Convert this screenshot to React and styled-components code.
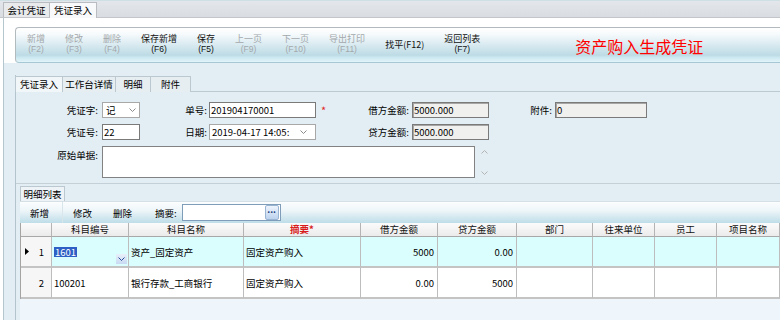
import React from "react";
import styled, { createGlobalStyle } from "styled-components";

const GlobalStyle = createGlobalStyle`
  html, body { margin: 0; padding: 0; background: #ffffff; }
  body {
    font-family: "Noto Sans CJK SC", "Noto Sans", sans-serif;
    font-size: 9.5px;
    color: #000;
    overflow: hidden;
  }
`;

const Page = styled.div`
  width: 780px;
  height: 320px;
  overflow: hidden;
  display: flex;
  flex-direction: column;
`;

/* ---------- top document tabs ---------- */
const TopTabBar = styled.div`
  flex: none;
  height: 17px;
  display: flex;
  align-items: flex-end;
  padding-left: 4px;
  background: linear-gradient(#cfe0e4 0, #cfe0e4 1px, #e3e6ea 1px, #d9dde2 100%);
  border-bottom: 1px solid #c2c6ca;
`;

const TopTab = styled.div`
  box-sizing: border-box;
  width: ${(p) => p.$w}px;
  height: ${(p) => (p.$active ? 16 : 15)}px;
  margin-bottom: ${(p) => (p.$active ? -1 : 0)}px;
  margin-left: -1px;
  border: 1px solid #b9bdc2;
  border-bottom: none;
  background: ${(p) => (p.$active ? "#f8f9fa" : "#e8eaec")};
  text-align: center;
  line-height: 14px;
`;

const Main = styled.div`
  flex: 1;
  min-height: 0;
  margin-left: 3px;
  border-left: 1px solid #b6c6ce;
  display: flex;
  flex-direction: column;
`;

/* ---------- big toolbar ---------- */
const HeaderBand = styled.div`
  flex: none;
  background: #ffffff;
  padding: 9px 0 0 11px;
`;

const Toolbar = styled.div`
  height: 34px;
  border: 1px solid #b3babe;
  border-right: none;
  border-bottom-color: #a6c8d4;
  border-radius: 4px 0 0 4px;
  background: linear-gradient(
    #ffffff 0%,
    #f6fafc 18%,
    #d8eaf0 50%,
    #bddbe5 80%,
    #cfeaf2 88%,
    #e0f3f8 100%
  );
  display: flex;
  align-items: center;
  gap: 20px;
  padding-left: 11px;
`;

const ToolButton = styled.div`
  display: flex;
  flex-direction: column;
  align-items: center;
  font-size: 9px;
  line-height: 11px;
  color: ${(p) => (p.$disabled ? "#a3a8ab" : "#111")};
  white-space: nowrap;
  margin-top: -2px;
`;

const FKey = styled.span`
  font-family: "Liberation Sans", Arial, sans-serif;
  font-size: 8.5px;
  line-height: 11px;
`;

const Banner = styled.div`
  margin-left: 75px;
  margin-top: 2px;
  color: #ff0000;
  font-size: 16px;
  line-height: 18px;
  white-space: nowrap;
`;

/* ---------- lower area ---------- */
const LowerArea = styled.div`
  flex: 1;
  min-height: 0;
  background: #e2eef3;
  padding: 12px 0 0 11px;
  display: flex;
  flex-direction: column;
`;

const SubPanel = styled.div`
  flex: 1;
  min-height: 0;
  border-left: 1px solid #b4c4cc;
  display: flex;
  flex-direction: column;
`;

const TabRow = styled.div`
  flex: none;
  height: 16px;
  display: flex;
  align-items: flex-end;
  border-bottom: 1px solid #bccad2;
`;

const Tab = styled.div`
  box-sizing: border-box;
  width: ${(p) => p.$w}px;
  height: 16px;
  margin-left: -1px;
  margin-bottom: -1px;
  border: 1px solid #bcc8d0;
  border-bottom: none;
  background: ${(p) => (p.$active ? "#f1f6f9" : "#e6eef2")};
  text-align: center;
  line-height: 15px;
`;

/* ---------- voucher form ---------- */
const FormPanel = styled.div`
  flex: none;
  background: #e3eef4;
  padding: 10px 0 5px 0;
  border-bottom: 1px solid #c4d0d8;
`;

const FormGrid = styled.div`
  display: grid;
  grid-template-columns: 86px 38px 69px 107px 25px 71px 77px 66px 92px;
  row-gap: 6px;
  align-items: center;
`;

const Label = styled.div`
  text-align: right;
  padding-right: ${(p) => p.$pr ?? 3}px;
  white-space: nowrap;
  align-self: ${(p) => (p.$top ? "start" : "center")};
  padding-top: ${(p) => (p.$top ? 2 : 0)}px;
`;

const Field = styled.div`
  box-sizing: border-box;
  height: 16px;
  border: 1px solid ${(p) => (p.$light ? "#a8a8a8" : "#7a7a7a")};
  background: ${(p) => (p.$disabled ? "#f0f0ee" : "#ffffff")};
  box-shadow: ${(p) => (p.$disabled ? "inset 1px 1px 0 #a6a6a6" : "none")};
  padding: 0 ${(p) => (p.$padL ?? 1)}px;
  line-height: 13px;
  display: flex;
  align-items: center;
  justify-content: space-between;
  white-space: nowrap;
  overflow: hidden;
`;

const Star = styled.div`
  color: #e02828;
  padding-left: 5px;
  font-size: 11px;
`;

const MemoWrap = styled.div`
  grid-column: 2 / -1;
  display: flex;
  align-items: stretch;
  gap: 4px;
`;

const MemoBox = styled.div`
  box-sizing: border-box;
  width: 373px;
  height: 32px;
  border: 1px solid #828282;
  background: #ffffff;
`;

const ScrollArrows = styled.div`
  width: 10px;
  display: flex;
  flex-direction: column;
  justify-content: space-between;
  align-items: center;
  padding: 4px 0 3px;
`;

const ChevronGap = styled.span`
  display: flex;
  padding-right: 6px;
`;

const Chevron = ({ up, color = "#8a8a8a", w = 7 }) => (
  <svg width={w} height="4" viewBox="0 0 7 4">
    <polyline
      points={up ? "0.5,3.5 3.5,0.5 6.5,3.5" : "0.5,0.5 3.5,3.5 6.5,0.5"}
      fill="none"
      stroke={color}
      strokeWidth="1"
    />
  </svg>
);

/* ---------- detail list ---------- */
const Detail = styled.div`
  flex: 1;
  min-height: 0;
  display: flex;
  flex-direction: column;
  padding-left: 4px;
`;

const DetailTabRow = styled.div`
  flex: none;
  height: 17px;
  display: flex;
  align-items: flex-end;
`;

const DetailTab = styled.div`
  box-sizing: border-box;
  width: 45px;
  height: 15px;
  border: 1px solid #bcc8d0;
  border-bottom: none;
  background: #edf3f7;
  text-align: center;
  line-height: 14px;
`;

const DetailToolbar = styled.div`
  flex: none;
  height: 22px;
  display: flex;
  align-items: center;
  border-top: 1px solid #d4e0e6;
  box-sizing: border-box;
  background: linear-gradient(#fbfdfe 0%, #eef6f9 40%, #d2e7ef 75%, #bedde8 100%);
`;

const ListButton = styled.div`
  box-sizing: border-box;
  width: ${(p) => p.$w}px;
  height: 100%;
  padding-left: 10px;
  display: flex;
  align-items: center;
  border-right: ${(p) => (p.$sep ? "1px solid #d8e6ec" : "none")};
`;

const SearchLabel = styled.div`
  padding-left: 12px;
  padding-right: 5px;
`;

const SearchInput = styled.div`
  box-sizing: border-box;
  width: 99px;
  height: 17px;
  border: 1px solid #7f9db9;
  background: #ffffff;
  display: flex;
  justify-content: flex-end;
  align-items: center;
  padding-right: 1px;
`;

const EllipsisButton = styled.div`
  width: 12px;
  height: 13px;
  border: 1px solid #9ab4d4;
  border-radius: 2px;
  background: linear-gradient(#eef4fc, #bcd2ee);
  color: #1c3c7c;
  font-size: 9px;
  line-height: 8px;
  text-align: center;
  font-weight: 700;
`;

const TableArea = styled.div`
  flex: 1;
  min-height: 0;
  background: #eef5fb;
  overflow: hidden;
`;

const Grid = styled.div`
  display: grid;
  grid-template-columns: 31px 77px 115px 117px 77px 79px 76px 62px 62px 63px 90px;
  width: max-content;
  border-left: 1px solid #a4a4a4;
`;

const HeadCell = styled.div`
  box-sizing: border-box;
  height: 14px;
  line-height: 12px;
  text-align: center;
  background: linear-gradient(#fbfbfb, #ebebeb);
  border-right: 1px solid #b4b4b4;
  border-bottom: 1px solid #a8a8a8;
  color: ${(p) => (p.$required ? "#d81c1c" : "#111")};
  font-weight: ${(p) => (p.$required ? 700 : 400)};
  white-space: nowrap;
`;

const Cell = styled.div`
  position: relative;
  box-sizing: border-box;
  height: 31px;
  display: flex;
  align-items: center;
  justify-content: ${(p) => (p.$right ? "flex-end" : "flex-start")};
  padding: 0 ${(p) => (p.$right ? 3 : 2)}px 0 2px;
  background: ${(p) => (p.$active ? "#dafdfd" : "#ffffff")};
  border-right: 1px solid #bdbdbd;
  border-bottom: 2px solid #c4c4c4;
  white-space: nowrap;
`;

const IndexCell = styled(Cell)`
  background: #f6f6f6;
  justify-content: space-between;
  padding: 0 7px 0 4px;
`;

const Selected = styled.span`
  background: #2d5fc4;
  color: #ffffff;
  line-height: 10px;
  padding: 0 1px;
`;

const DropButton = styled.div`
  position: absolute;
  right: 1px;
  bottom: 2px;
  width: 11px;
  height: 10px;
  display: flex;
  align-items: center;
  justify-content: center;
  background: linear-gradient(#e8f0fa, #c8daf2);
`;

const columns = ["科目编号", "科目名称", "摘要*", "借方金额", "贷方金额", "部门", "往来单位", "员工", "项目名称", ""];

const rows = [
  { n: 1, code: "1601", name: "资产_固定资产", memo: "固定资产购入", debit: "5000", credit: "0.00", active: true },
  { n: 2, code: "100201", name: "银行存款_工商银行", memo: "固定资产购入", debit: "0.00", credit: "5000" },
];

const toolButtons = [
  { label: "新增", key: "(F2)", disabled: true },
  { label: "修改", key: "(F3)", disabled: true },
  { label: "删除", key: "(F4)", disabled: true },
  { label: "保存新增", key: "(F6)" },
  { label: "保存", key: "(F5)" },
  { label: "上一页", key: "(F9)", disabled: true },
  { label: "下一页", key: "(F10)", disabled: true },
  { label: "导出打印", key: "(F11)", disabled: true },
  { label: "找平(F12)" },
  { label: "返回列表", key: "(F7)" },
];

const App = () => {
  return (
    <Page>
      <GlobalStyle />
      <TopTabBar>
        <TopTab $w={47}>会计凭证</TopTab>
        <TopTab $w={48} $active>凭证录入</TopTab>
      </TopTabBar>
      <Main>
        <HeaderBand>
          <Toolbar>
            {toolButtons.map((b) => (
              <ToolButton key={b.label} $disabled={b.disabled}>
                <span>{b.label}</span>
                {b.key && <FKey>{b.key}</FKey>}
              </ToolButton>
            ))}
            <Banner>资产购入生成凭证</Banner>
          </Toolbar>
        </HeaderBand>

        <LowerArea>
          <SubPanel>
            <TabRow>
              <Tab $w={48} $active>凭证录入</Tab>
              <Tab $w={54}>工作台详情</Tab>
              <Tab $w={36}>明细</Tab>
              <Tab $w={41}>附件</Tab>
            </TabRow>

            <FormPanel>
              <FormGrid>
                <Label $pr={4}>凭证字:</Label>
                <Field $light $padL={3}>
                  <span>记</span>
                  <Chevron />
                </Field>
                <Label $pr={2}>单号:</Label>
                <Field>201904170001</Field>
                <Star>*</Star>
                <Label>借方金额:</Label>
                <Field $disabled>5000.000</Field>
                <Label>附件:</Label>
                <Field $disabled>0</Field>

                <Label $pr={4}>凭证号:</Label>
                <Field>22</Field>
                <Label $pr={2}>日期:</Label>
                <Field $light $padL={2}>
                  <span>2019-04-17 14:05:</span>
                  <ChevronGap>
                    <Chevron />
                  </ChevronGap>
                </Field>
                <div />
                <Label>贷方金额:</Label>
                <Field $disabled>5000.000</Field>
                <div />
                <div />

                <Label $pr={4} $top>原始单据:</Label>
                <MemoWrap>
                  <MemoBox />
                  <ScrollArrows>
                    <Chevron up color="#b4b4b4" />
                    <Chevron color="#b4b4b4" />
                  </ScrollArrows>
                </MemoWrap>
              </FormGrid>
            </FormPanel>

            <Detail>
              <DetailTabRow>
                <DetailTab>明细列表</DetailTab>
              </DetailTabRow>
              <DetailToolbar>
                <ListButton $w={43} $sep>新增</ListButton>
                <ListButton $w={40}>修改</ListButton>
                <ListButton $w={40}>删除</ListButton>
                <SearchLabel>摘要:</SearchLabel>
                <SearchInput>
                  <EllipsisButton>...</EllipsisButton>
                </SearchInput>
              </DetailToolbar>

              <TableArea>
                <Grid>
                  <HeadCell />
                  {columns.map((c, i) => (
                    <HeadCell key={i} $required={c === "摘要*"}>
                      {c}
                    </HeadCell>
                  ))}
                  {rows.map((r) => (
                    <React.Fragment key={r.n}>
                      <IndexCell>
                        {r.active ? (
                          <svg width="4" height="7" viewBox="0 0 4 7">
                            <polygon points="0,0 4,3.5 0,7" fill="#000" />
                          </svg>
                        ) : (
                          <span />
                        )}
                        <span>{r.n}</span>
                      </IndexCell>
                      <Cell $active={r.active}>
                        {r.active ? <Selected>{r.code}</Selected> : r.code}
                        {r.active && (
                          <DropButton>
                            <Chevron color="#2c4c9c" />
                          </DropButton>
                        )}
                      </Cell>
                      <Cell $active={r.active}>{r.name}</Cell>
                      <Cell $active={r.active}>{r.memo}</Cell>
                      <Cell $active={r.active} $right>{r.debit}</Cell>
                      <Cell $active={r.active} $right>{r.credit}</Cell>
                      <Cell $active={r.active} />
                      <Cell $active={r.active} />
                      <Cell $active={r.active} />
                      <Cell $active={r.active} />
                      <Cell $active={r.active} />
                    </React.Fragment>
                  ))}
                </Grid>
              </TableArea>
            </Detail>
          </SubPanel>
        </LowerArea>
      </Main>
    </Page>
  );
};

export default App;
